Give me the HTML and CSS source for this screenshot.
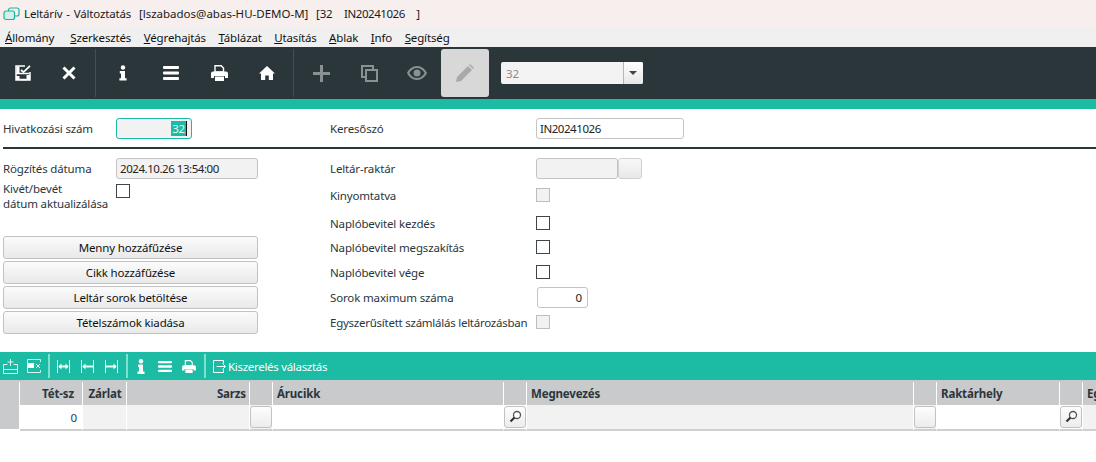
FILE: index.html
```html
<!DOCTYPE html>
<html>

<head>
    <title>Leltárív - Változtatás</title>
    <link rel="stylesheet" href="styles.css">
</head>

<body>
    <header class="titlebar">
        <svg class="app-icon" width="17" height="14" viewBox="0 0 17 14">
            <rect x="5.5" y="1" width="10.5" height="8" rx="2" fill="none" stroke="#1bb5a0" stroke-width="1.2"/>
            <rect x="1" y="4" width="10.5" height="8.5" rx="2" fill="#d5efe9" stroke="#1bb5a0" stroke-width="1.2"/>
        </svg>
        <span>Leltárív - Változtatás  <span class="title-user">[lszabados@abas-HU-DEMO-M]</span>  [32   <span class="value">IN20241026</span>   ]</span>
    </header>

    <nav class="menubar">
        <span><u>Á</u>llomány</span>
        <span><u>S</u>zerkesztés</span>
        <span><u>V</u>égrehajtás</span>
        <span><u>T</u>áblázat</span>
        <span><u>U</u>tasítás</span>
        <span><u>A</u>blak</span>
        <span><u>I</u>nfo</span>
        <span><u>S</u>egítség</span>
    </nav>

    <div class="toolbar">
        <div class="tool-group first">
            <div class="tool">
                <svg width="16" height="16" viewBox="0 0 16 16" fill="none" stroke="#fff">
                    <path d="M10 1H1v14h14V7" stroke-width="1.500"/>
                    <path d="M1 8.500h13" stroke-width="1.500"/>
                    <path d="M1.500 1.500h3v7h-3z" fill="#fff" stroke="none"/>
                    <path d="M1 11h3.500v4H1zM11.500 10h3.500v5h-3.500z" fill="#fff" stroke="none"/>
                    <path d="M4.500 14.500h7M6 5l2.500 2L15 .8" stroke-width="1.700"/>
                </svg>
            </div>
            <div class="tool">
                <svg width="14" height="14" viewBox="0 0 14 14"><path d="M1.500 1.500l11 11M12.500 1.500l-11 11" stroke="#fff" stroke-width="3"/></svg>
            </div>
        </div>
        <div class="tool-group second">
            <div class="tool">
                <svg width="8" height="18" viewBox="0 0 10 20" fill="#fff">
                    <circle cx="5" cy="3" r="2.800"/>
                    <path d="M1 7.500h6.500v9H9.500V19.500H.5v-3h2v-6H1z"/>
                </svg>
            </div>
            <div class="tool">
                <svg width="16" height="14" viewBox="0 0 16 14" fill="#fff">
                    <rect width="16" height="3" rx="1"/><rect y="5.500" width="16" height="3" rx="1"/><rect y="11" width="16" height="3" rx="1"/>
                </svg>
            </div>
            <div class="tool">
                <svg width="17" height="16" viewBox="0 0 17 16">
                    <path d="M4 .7h6.200L12.500 3v4H4z" fill="none" stroke="#fff" stroke-width="1.400"/>
                    <path d="M2 6.500h13a2 2 0 0 1 2 2V13h-3v-2H3v2H0V8.500a2 2 0 0 1 2-2z" fill="#fff"/>
                    <path d="M4 11.500h9V16H4z" fill="#fff"/>
                </svg>
            </div>
            <div class="tool">
                <svg width="16" height="14" viewBox="0 0 16 14" fill="#fff">
                    <path d="M8 0l8 7.500h-2V14H9.800V9.500H6.200V14H2V7.500H0z"/>
                </svg>
            </div>
        </div>
        <div class="tool-group third">
            <div class="tool">
                <svg width="17" height="17" viewBox="0 0 17 17"><path d="M8.500 0v17M0 8.500h17" stroke="#8a9194" stroke-width="3"/></svg>
            </div>
            <div class="tool">
                <svg width="17" height="17" viewBox="0 0 17 17" fill="none" stroke="#8a9194" stroke-width="2">
                    <path d="M4 12H1V1h11v3"/><rect x="5" y="5" width="11" height="11"/>
                </svg>
            </div>
            <div class="tool">
                <svg width="20" height="14" viewBox="0 0 20 14" fill="#8a9194">
                    <path d="M10 0c4.500 0 8 3 10 7-2 4-5.500 7-10 7S2 11 0 7c2-4 5.500-7 10-7zm0 2C6.800 2 4 4 2.300 7 4 10 6.800 12 10 12s6-2 7.700-5C16 4 13.200 2 10 2z" fill-rule="evenodd"/>
                    <circle cx="10" cy="7" r="3.500"/>
                </svg>
            </div>
            <div class="tool pressed">
                <svg width="18" height="18" viewBox="0 0 18 18" fill="#a9a9a9">
                    <path d="M0 18l1-5L12 2l4 4L5 17z"/><path d="M13 1l1-1 4 4-1 1z"/>
                </svg>
            </div>
        </div>
        <div class="combo">
            <span class="combo-value">32</span>
            <span class="combo-arrow"></span>
        </div>
    </div>
    <div class="teal-bar"></div>

    <main class="form">
        <div class="form-head">
            <div class="left-head">
                <label class="label">Hivatkozási szám</label>
                <div class="field ref-field"><span class="selected">32</span><span class="caret"></span></div>
            </div>
            <div class="right-head">
                <label class="label">Keresőszó</label>
                <div class="field search-field value">IN20241026</div>
            </div>
        </div>
        <hr class="rule">
        <div class="form-body">
            <section class="left-col">
                <div class="left-row">
                    <label class="label">Rögzítés dátuma</label>
                    <div class="field date-field value">2024.10.26 13:54:00</div>
                </div>
                <div class="left-row update-row">
                    <label class="label">Kivét/bevét<br>dátum aktualizálása</label>
                    <span class="check"></span>
                </div>
                <div class="buttons">
                    <button class="btn">Menny hozzáfűzése</button>
                    <button class="btn">Cikk hozzáfűzése</button>
                    <button class="btn">Leltár sorok betöltése</button>
                    <button class="btn">Tételszámok kiadása</button>
                </div>
            </section>
            <section class="right-col">
                <label class="label">Leltár-raktár</label>
                <div class="picker"><div class="field picker-field"></div><span class="picker-btn"></span></div>
                <label class="label">Kinyomtatva</label>
                <div><span class="check disabled"></span></div>
                <label class="label">Naplóbevitel kezdés</label>
                <div><span class="check"></span></div>
                <label class="label">Naplóbevitel megszakítás</label>
                <div><span class="check"></span></div>
                <label class="label">Naplóbevitel vége</label>
                <div><span class="check"></span></div>
                <label class="label">Sorok maximum száma</label>
                <div class="field max-field">0</div>
                <label class="label tight">Egyszerűsített számlálás leltározásban</label>
                <div><span class="check disabled"></span></div>
            </section>
        </div>
    </main>

    <div class="grid-toolbar">
        <div class="mini-group first">
            <svg width="15" height="15" viewBox="0 0 15 15" fill="none" stroke="#d9f3ee"><path d="M.5 5.500v9h14v-9h-4M4.500 5.500h-4M.5 10.500h14M7.500 0v7M4.500 3h6"/></svg>
            <svg width="14" height="14" viewBox="0 0 14 14" fill="none" stroke="#d9f3ee"><path d="M13.500 3V.5H.5v13h13V11"/><rect x="1" y="4" width="6" height="5" fill="#fff" stroke="none"/><path d="M9 5l4 4M13 5l-4 4"/></svg>
        </div>
        <div class="mini-group resize">
            <svg width="13" height="13" viewBox="0 0 13 13" fill="none" stroke="#e6f8f4"><path d="M.5 0v13M12.500 0v13"/><path d="M2 6.500h9" stroke-width="2"/><path d="M4.500 3.500v6L1.500 6.500zM8.500 3.500v6l3-3z" fill="#fff" stroke="none"/></svg>
            <svg width="13" height="13" viewBox="0 0 13 13" fill="none" stroke="#e6f8f4"><path d="M.5 0v13M12.500 0v13"/><path d="M2 6.500h10" stroke-width="2"/><path d="M4.500 3.500v6L1.500 6.500z" fill="#fff" stroke="none"/></svg>
            <svg width="13" height="13" viewBox="0 0 13 13" fill="none" stroke="#e6f8f4"><path d="M.5 0v13M12.500 0v13"/><path d="M1 6.500h10" stroke-width="2"/><path d="M8.500 3.500v6l3-3z" fill="#fff" stroke="none"/></svg>
        </div>
        <div class="mini-group output">
            <svg width="14" height="15" viewBox="0 0 14 15" fill="#fff">
                <circle cx="7" cy="2.300" r="2.200"/>
                <path d="M4 5.500h5v7h1.500V15h-7v-2.500H5v-4.500H4z"/>
            </svg>
            <svg width="14" height="11" viewBox="0 0 16 14" fill="#fff" preserveAspectRatio="none">
                <rect width="16" height="3" rx="1"/><rect y="5.500" width="16" height="3" rx="1"/><rect y="11" width="16" height="3" rx="1"/>
            </svg>
            <svg width="14" height="13" viewBox="0 0 17 16">
                <path d="M4 .7h6.200L12.500 3v4H4z" fill="none" stroke="#fff" stroke-width="1.400"/>
                <path d="M2 6.500h13a2 2 0 0 1 2 2V13h-3v-2H3v2H0V8.500a2 2 0 0 1 2-2z" fill="#fff"/>
                <path d="M4 11.500h9V16H4z" fill="#fff"/>
            </svg>
        </div>
        <div class="mini-action">
            <svg width="13" height="13" viewBox="0 0 13 13" fill="none" stroke="#fff"><path d="M10.500 3.500V.5H.5v12h10V9.500M3.500 6.500h9M9.500 3.500l3 3-3 3"/></svg>
            <span>Kiszerelés választás</span>
        </div>
    </div>

    <div class="table">
        <div class="thead">
            <div class="th"></div>
            <div class="th right wide-pad">Tét-sz</div>
            <div class="th center">Zárlat</div>
            <div class="th right">Sarzs</div>
            <div class="th"></div>
            <div class="th">Árucikk</div>
            <div class="th"></div>
            <div class="th">Megnevezés</div>
            <div class="th"></div>
            <div class="th">Raktárhely</div>
            <div class="th"></div>
            <div class="th">Egység</div>
        </div>
        <div class="tbody">
            <div class="td row-head"></div>
            <div class="td num">0</div>
            <div class="td muted"></div>
            <div class="td muted"></div>
            <div class="td muted"><span class="cell-btn"></span></div>
            <div class="td"></div>
            <div class="td"><span class="cell-btn"><svg width="14" height="14" viewBox="0 0 14 14"><circle cx="9" cy="5" r="3.500" fill="#fff" stroke="#555" stroke-width="1.300"/><path d="M6.500 7.500L2.500 11.500" stroke="#333" stroke-width="2.200"/></svg></span></div>
            <div class="td muted"></div>
            <div class="td muted"><span class="cell-btn"></span></div>
            <div class="td"></div>
            <div class="td"><span class="cell-btn"><svg width="14" height="14" viewBox="0 0 14 14"><circle cx="9" cy="5" r="3.500" fill="#fff" stroke="#555" stroke-width="1.300"/><path d="M6.500 7.500L2.500 11.500" stroke="#333" stroke-width="2.200"/></svg></span></div>
            <div class="td muted"></div>
        </div>
    </div>
</body>

</html>
```

FILE: styles.css
```css
html,
body {
    margin: 0;
    height: 100%;
    overflow: hidden;
}

body {
    background-color: #ffffff;
    color: #2b363b;
    font-family: 'Noto Sans', 'Open Sans', sans-serif;
    font-size: 11.5px;
    letter-spacing: -0.15px;
}

.titlebar {
    height: 27px;
    background-color: #f7efed;
    display: flex;
    align-items: center;
    padding-left: 3px;
    color: #1a1a1a;
    white-space: pre;
    word-spacing: 1px;
}

.title-user {
    letter-spacing: 0;
}

.app-icon {
    margin-right: 4px;
}

.menubar {
    height: 20px;
    background-color: #f0f0f0;
    display: flex;
    align-items: center;
    padding-left: 5px;
    gap: 12.5px;
    color: #111111;
}

.menubar span:first-child {
    margin-right: 3.5px;
}

/* main toolbar */
.toolbar {
    height: 52px;
    background-color: #2b363b;
    display: flex;
    align-items: stretch;
}

.tool-group {
    display: flex;
    border-right: 1px solid #434e53;
    margin: 2px 0;
}

.tool-group.first {
    width: 95px;
}

.tool-group.first .tool {
    width: 46px;
}

.tool-group.second {
    padding-left: 3px;
    width: 194px;
}

.tool-group.third {
    border-right: none;
    padding-left: 3px;
}

.tool {
    width: 48px;
    display: flex;
    align-items: center;
    justify-content: center;
}

.tool.pressed {
    background-color: #d8d8d8;
    border-radius: 3px;
}

.combo {
    align-self: center;
    margin-left: 12px;
    width: 142px;
    height: 22px;
    background-color: #f3f3f3;
    border-radius: 2px;
    display: flex;
    align-items: center;
    box-sizing: border-box;
}

.combo-value {
    flex: 1;
    padding-left: 5px;
    color: #8a8a8a;
}

.combo-arrow {
    width: 20px;
    height: 22px;
    box-sizing: border-box;
    border-left: 1px solid #b5b5b5;
    background: linear-gradient(#ffffff, #e6e6e6);
    position: relative;
    border-radius: 0 2px 2px 0;
}

.combo-arrow::after {
    content: '';
    position: absolute;
    left: 5px;
    top: 9px;
    border: 4px solid transparent;
    border-top: 4px solid #444444;
    border-bottom: none;
}

.teal-bar {
    height: 10px;
    background-color: #1bbba4;
}

/* form */
.form {
    padding: 9px 0 0 3px;
}

.form-head {
    display: flex;
    height: 21px;
}

.left-head,
.right-head {
    display: flex;
    align-items: center;
}

.left-head {
    width: 327px;
}

.left-head .label {
    width: 113px;
}

.right-head .label {
    width: 206px;
}

.label {
    line-height: 15px;
    white-space: nowrap;
}

.label.tight {
    letter-spacing: -0.25px;
}

.value {
    letter-spacing: -0.45px;
}

.field {
    box-sizing: border-box;
    height: 21px;
    line-height: 19px;
    padding: 0 3px;
    border: 1px solid #c4c4c4;
    border-radius: 3px;
    background-color: #ffffff;
    color: #222222;
}

.ref-field {
    width: 76px;
    border-color: #1bbba4;
    background-color: #f2f2f2;
    display: flex;
    justify-content: flex-end;
    align-items: center;
    padding: 0 4px 0 0;
}

.selected {
    background-color: #1bbba4;
    color: #e8f8f5;
    line-height: 15px;
    padding: 0 1px;
}

.caret {
    width: 1px;
    height: 15px;
    background-color: #111111;
}

.search-field {
    width: 148px;
}

.rule {
    height: 2px;
    margin: 8px 0 9px;
    border: none;
    background-color: #2b363b;
}

.form-body {
    display: flex;
}

.left-col {
    width: 255px;
    margin-right: 72px;
}

.left-row {
    display: flex;
    align-items: center;
    height: 21px;
}

.left-row .label {
    width: 113px;
}

.date-field {
    width: 142px;
    background-color: #f2f2f2;
}

.update-row {
    height: 34px;
    margin-top: 2px;
    align-items: flex-start;
}

.update-row .check {
    margin-top: 3px;
}

.check {
    display: block;
    box-sizing: border-box;
    width: 14px;
    height: 14px;
    border: 1px solid #3d464a;
    background-color: #ffffff;
}

.check.disabled {
    border-color: #bdbdbd;
    background-color: #f2f2f2;
}

.buttons {
    margin-top: 21px;
    display: flex;
    flex-direction: column;
    gap: 2px;
}

.btn {
    height: 23px;
    padding: 0 0 1px;
    border: 1px solid #c2c2c2;
    border-radius: 3px;
    background: linear-gradient(#fbfbfb, #e9e9e9);
    font: inherit;
    letter-spacing: inherit;
    color: #111111;
}

.right-col {
    display: grid;
    grid-template-columns: 206px auto;
    grid-template-rows: 21px 32px 24px 24px 26px 25px 24px;
    align-items: center;
    justify-items: start;
}

.picker {
    display: flex;
}

.picker-field {
    width: 82px;
    background-color: #f2f2f2;
}

.picker-btn {
    width: 24px;
    height: 21px;
    box-sizing: border-box;
    border: 1px solid #d0d0d0;
    border-radius: 3px;
    background: linear-gradient(#f8f8f8, #e8e8e8);
}

.max-field {
    width: 51px;
    margin-left: 1px;
    text-align: right;
    padding-right: 5px;
}

/* table section */
.grid-toolbar {
    margin-top: 18px;
    height: 28px;
    background-color: #1bbba4;
    display: flex;
    align-items: center;
    color: #ffffff;
}

.mini-group {
    box-sizing: border-box;
    display: flex;
    align-items: center;
    height: 24px;
    border-right: 2px solid #7fe0d0;
}

.mini-group.first {
    width: 50px;
    gap: 9px;
    padding-left: 3px;
}

.mini-group.resize {
    width: 78px;
    gap: 11px;
    padding-left: 7px;
}

.mini-group.output {
    width: 78px;
    gap: 10px;
    padding-left: 6px;
}

.mini-action {
    display: flex;
    align-items: center;
    gap: 2px;
    padding-left: 7px;
    letter-spacing: -0.3px;
}

.table {
    width: 1096px;
    overflow: hidden;
}

.thead,
.tbody {
    display: grid;
    grid-template-columns: 20px 63px 44px 123px 23px 231px 23px 387px 23px 123px 23px 100px;
}

.thead {
    height: 25px;
    box-sizing: border-box;
    padding-top: 2px;
    background-color: #c9cacc;
}

.th {
    box-sizing: border-box;
    border-right: 1px solid #ffffff;
    padding: 0 3px 0 4px;
    line-height: 23px;
    font-weight: 700;
    color: #2b363b;
    white-space: nowrap;
}

.th.right {
    text-align: right;
}

.th.wide-pad {
    padding-right: 8px;
}

.th.center {
    text-align: center;
}

.tbody {
    height: 26px;
    box-sizing: border-box;
}

.td {
    box-sizing: border-box;
    height: 26px;
    border-right: 1px solid #ffffff;
    border-bottom: 2px solid #cfcfcf;
    background-color: #ffffff;
    display: flex;
    align-items: center;
}

.td.row-head {
    background-color: #c9cacc;
    border-bottom-color: #ffffff;
}

.td.muted {
    background-color: #f2f2f2;
}

.td.num {
    justify-content: flex-end;
    padding-right: 5px;
    color: #1c3a78;
}

.cell-btn {
    box-sizing: border-box;
    width: 22px;
    height: 22px;
    border: 1px solid #c2c2c2;
    border-radius: 3px;
    background: linear-gradient(#fdfdfd, #ececec);
    display: flex;
    align-items: center;
    justify-content: center;
}
```
